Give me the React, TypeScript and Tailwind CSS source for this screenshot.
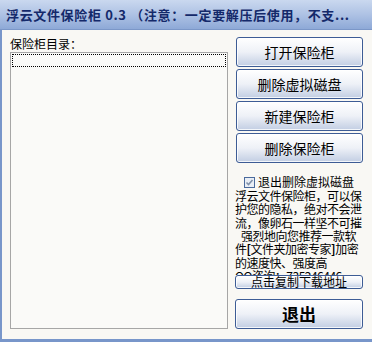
import React from 'react';

const btn =
  'flex items-center justify-center border border-[#3d5c95] rounded-[3px] bg-linear-to-b from-[#ffffff] via-[#eef1f7] to-[#c2cee3] shadow-[inset_0_0_0_1px_rgba(255,255,255,0.8)] text-black';

function Checkbox() {
  return (
    <svg width="11" height="11" viewBox="0 0 11 11" className="shrink-0">
      <rect x="0.5" y="0.5" width="10" height="10" fill="#e9eef5" stroke="#4a6a9c" />
      <path d="M2.5 5.5 L4.5 7.5 L8.5 3" fill="none" stroke="#7f90aa" strokeWidth="1.6" />
    </svg>
  );
}

export default function App() {
  const lines = [
    '浮云文件保险柜，可以保',
    '护您的隐私，绝对不会泄',
    '流，像卵石一样坚不可摧',
  ];

  return (
    <div className="w-[372px] h-[342px] flex flex-col overflow-hidden select-none font-['Noto_Sans_CJK_SC',sans-serif]">
      {/* title */}
      <div className="h-[30px] shrink-0 flex items-center pl-[6px] overflow-hidden bg-linear-to-b from-[#cad8ef] via-[#aec2e4] to-[#8ea9d7] border-b border-[#7b97c8]">
        <span className="text-[13px] font-bold text-[#14296a] whitespace-nowrap tracking-[0.65px]">
          浮云文件保险柜 0.3 （注意：一定要解压后使用，不支...
        </span>
      </div>

      <div className="flex-1 flex bg-[#f9f8f4] border-l-2 border-b-[3px] border-[#7896ca]">
        {/* left */}
        <div className="pl-[8px] pt-[6px] flex flex-col">
          <div className="h-[16px] text-[12px] leading-[16px] text-black">保险柜目录：</div>
          <div className="w-[218px] h-[277px] border border-[#a6a6a6] bg-[#fafaf8] p-px">
            <div className="h-[13px] border border-dotted border-black" />
          </div>
        </div>

        {/* right */}
        <div className="ml-[8px] w-[127px] pt-[7px] flex flex-col">
          <div className="flex flex-col gap-[2px]">
            <button className={`${btn} h-[30px] text-[14px]`}>打开保险柜</button>
            <button className={`${btn} h-[30px] text-[14px]`}>删除虚拟磁盘</button>
            <button className={`${btn} h-[30px] text-[14px]`}>新建保险柜</button>
            <button className={`${btn} h-[30px] text-[14px]`}>删除保险柜</button>
          </div>

          <div className="mt-[12px] h-[14px] flex items-center gap-[3px] pl-[8px] text-[12px] leading-[14px] text-black">
            <Checkbox />
            <span className="whitespace-nowrap">退出删除虚拟磁盘</span>
          </div>

          <div className="-ml-px h-[86px] overflow-hidden text-[12px] leading-[13.34px] tracking-[-0.5px] text-black">
            {lines.map((l) => (
              <div key={l} className="whitespace-nowrap">{l}</div>
            ))}
            <div className="whitespace-nowrap pl-[6px]">强烈地向您推荐一款软</div>
            <div className="whitespace-nowrap">件<b>[</b>文件夹加密专家<b>]</b>加密</div>
            <div className="whitespace-nowrap">的速度快、强度高</div>
            <div className="whitespace-nowrap">QQ咨询：735246446</div>
          </div>

          <button className={`${btn} -ml-px h-[14px] text-[12px] leading-none`}>点击复制下载地址</button>

          <button className={`${btn} -ml-px mt-[10px] h-[30px] text-[17px] font-bold`}>退出</button>
        </div>
      </div>
    </div>
  );
}
